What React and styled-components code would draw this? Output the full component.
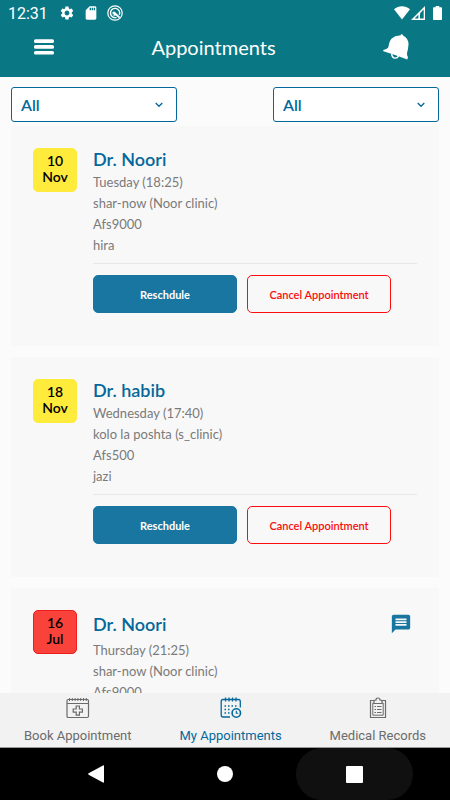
import React from "react";
import styled, { createGlobalStyle, ThemeProvider } from "styled-components";
import { MdSettings, MdSdCard, MdMessage } from "react-icons/md";

const theme = {
  colors: {
    header: "#0a7884",
    primary: "#1976a0",
    link: "#04689b",
    page: "#fbfbfb",
    card: "#f8f8f8",
    text: "#7a7a7a",
    danger: "#fb0d0d",
    yellow: "#ffeb3b",
    red: "#f9423a",
  },
};

const appointments = [
  {
    id: 1,
    day: "10",
    month: "Nov",
    doctor: "Dr. Noori",
    details: ["Tuesday (18:25)", "shar-now (Noor clinic)", "Afs9000", "hira"],
  },
  {
    id: 2,
    day: "18",
    month: "Nov",
    doctor: "Dr. habib",
    details: ["Wednesday (17:40)", "kolo la poshta (s_clinic)", "Afs500", "jazi"],
  },
  {
    id: 3,
    day: "16",
    month: "Jul",
    doctor: "Dr. Noori",
    details: ["Thursday (21:25)", "shar-now (Noor clinic)", "Afs9000"],
    past: true,
  },
];

const StatusIcons = () => (
  <StatusGroup $gap="1px">
    <svg width="16" height="14" viewBox="0 0 16 14" fill="#fff">
      <path d="M0 3.3C4.6-.7 11.4-.7 16 3.3L8 13.5z" />
    </svg>
    <svg width="15" height="14" viewBox="0 0 15 14">
      <path d="M14 0V14H0z" fill="#fff" />
      <path d="M7.4 8.8v3.8H3.6z" fill="#0a7884" />
      <path d="M9 7.2L12.700 3.5V12.600H9z" fill="#0a7884" />
    </svg>
    <svg width="15" height="14" viewBox="0 0 15 14" fill="#fff">
      <path d="M8.700 0h3.600v1.200h1.900q.8 0 .8.8v11.200q0 .8-.8.8H6.800q-.8 0-.8-.8V2q0-.8.8-.8h1.900z" />
    </svg>
  </StatusGroup>
);

const DebugIcon = () => (
  <svg width="16" height="16" viewBox="0 0 16 16" fill="none" stroke="#fff">
    <circle cx="8" cy="8" r="7.2" strokeWidth="1.2" />
    <path d="M12.300 9.800A4.600 4.600 0 1 0 9.600 12.300" strokeWidth="1.400" />
    <path d="M5 8.200Q6.200 5.600 8 6.900L13.200 11.900L11.900 13.200L9 10.500Q7 11.200 5.600 9.800L7.400 9.200z" fill="#fff" stroke="none" />
  </svg>
);

const MenuIcon = () => (
  <svg width="20" height="16" viewBox="0 0 20 16" fill="#fff">
    <rect y="0.300" width="20" height="3.700" rx="1.600" />
    <rect y="6.100" width="20" height="3.700" rx="1.600" />
    <rect y="11.900" width="20" height="3.700" rx="1.600" />
  </svg>
);

const BellIcon = () => (
  <svg width="26" height="26" viewBox="0 0 26 26" fill="#fff">
    <path d="M18.300.2Q20.300-.1 20.300 1.700Q25.600 4.500 25.500 10.500Q25.200 15 24.200 18.300Q23.600 21.300 25 23L24.300 25.500Q12 20.800.4 17.300Q-.2 16.200 1 15.800Q4.900 15 5.500 12.500Q6.300 6.900 8.700 4.400Q12.100 1.200 17.300 1.500z" />
    <path d="M8.700 19.900Q8.900 23.900 12.100 24.100Q14.600 24.200 15.500 22" fill="none" stroke="#fff" strokeWidth="1.400" />
  </svg>
);

const ChevronIcon = () => (
  <Chevron width="8" height="6" viewBox="0 0 8 6" fill="none" stroke="#04689b" strokeWidth="1.3">
    <path d="M.7 1L4 4.300L7.300 1" />
  </Chevron>
);

const BookIcon = () => (
  <svg width="24" height="22" viewBox="0 0 24 22" fill="none" stroke="currentColor">
    <rect x="1" y="2.500" width="21.500" height="18" rx="1.200" strokeWidth="1.200" />
    <path d="M1 6.500H22.500" />
    <path d="M3.500 1v3M6.300 1v3M9.100 1v3M11.900 1v3M14.700 1v3M17.500 1v3M20.300 1v3" />
    <path d="M10.200 9h3.200v3h3v3.200h-3v3h-3.200v-3h-3V12h3z" strokeWidth="1.200" />
  </svg>
);

const CalendarIcon = () => (
  <svg width="22" height="22" viewBox="0 0 22 22" fill="none" stroke="currentColor" strokeWidth="1.300">
    <path d="M10 20H3Q1.200 20 1.200 18V4.500Q1.200 2.500 3 2.500H18.500Q20.300 2.500 20.300 4.500V10.500" />
    <path d="M5.500 .5v4M9 .5v4M12.500 .5v4M16 .5v4" />
    <path d="M4.500 9h13M4.500 12.500h7M4.500 16h5.500" strokeDasharray="1.500 2" />
    <circle cx="16.300" cy="16" r="4.200" strokeWidth="1.600" />
    <path d="M16.300 13.700V16.300H18.200" strokeWidth="1.100" />
  </svg>
);

const RecordsIcon = () => (
  <svg width="18" height="22" viewBox="0 0 18 22" fill="none" stroke="currentColor">
    <path d="M5 3.500H1.500V20.500H16.500V3.500H13" strokeWidth="1.200" />
    <path d="M5 6H3.800V18.200H14.200V6H13" />
    <path d="M5 6.500V3.500L7 3Q7 1 9 1T11 3L13 3.500V6.500z" strokeWidth="1.200" />
    <path d="M5.500 9.500H7M8 9.500H12.500M5.500 12.500H7M8 12.500H12.500M5.500 15.500H7M8 15.500H12.500" />
  </svg>
);

const Filter = ({ label }) => (
  <SelectBox>
    <select aria-label={label} defaultValue="All">
      <option>All</option>
    </select>
    <ChevronIcon />
  </SelectBox>
);

const AppointmentCard = ({ item }) => (
  <Card>
    <DateBadge $past={item.past}>
      <span>{item.day}</span>
      <span>{item.month}</span>
    </DateBadge>
    <CardBody>
      <CardTitle>
        <h2>{item.doctor}</h2>
        {item.past && (
          <IconButton aria-label="Message">
            <MdMessage size={22} />
          </IconButton>
        )}
      </CardTitle>
      {item.details.map((line) => (
        <p key={line}>{line}</p>
      ))}
      <hr />
      {!item.past && (
        <Actions>
          <ActionButton>Reschdule</ActionButton>
          <ActionButton $outline>Cancel Appointment</ActionButton>
        </Actions>
      )}
    </CardBody>
  </Card>
);

const App = () => {
  return (
    <ThemeProvider theme={theme}>
      <GlobalStyle />
      <Screen>
        <Header>
          <StatusBar>
            <StatusGroup $gap="8px">
              <Clock>12:31</Clock>
              <MdSettings size={16} />
              <MdSdCard size={16} />
              <DebugIcon />
            </StatusGroup>
            <StatusIcons />
          </StatusBar>
          <Toolbar>
            <IconButton aria-label="Menu">
              <MenuIcon />
            </IconButton>
            <h1>Appointments</h1>
            <BellButton aria-label="Notifications">
              <BellIcon />
            </BellButton>
          </Toolbar>
        </Header>

        <Filters>
          <Filter label="Status" />
          <Filter label="Doctor" />
        </Filters>

        <List>
          {appointments.map((item) => (
            <AppointmentCard key={item.id} item={item} />
          ))}
        </List>

        {/* bottom tabs */}
        <Tabs>
          <Tab href="#book">
            <BookIcon />
            Book Appointment
          </Tab>
          <Tab href="#appointments" $active>
            <CalendarIcon />
            My Appointments
          </Tab>
          <Tab href="#records">
            <RecordsIcon />
            Medical Records
          </Tab>
        </Tabs>

        {/* system keys */}
        <SystemBar>
          <SystemKey aria-label="Back">
            <svg width="16" height="18" viewBox="0 0 16 18" fill="#fff">
              <path d="M15 .5Q16 0 16 1V17Q16 18 15 17.500L.6 9.700Q-.2 9 .6 8.300z" />
            </svg>
          </SystemKey>
          <SystemKey aria-label="Home">
            <svg width="16" height="16" viewBox="0 0 16 16" fill="#fff">
              <circle cx="8" cy="8" r="8" />
            </svg>
          </SystemKey>
          <SystemKey aria-label="Overview" $pressed>
            <svg width="17" height="17" viewBox="0 0 17 17" fill="#fff">
              <rect width="17" height="17" rx="1" />
            </svg>
          </SystemKey>
        </SystemBar>
      </Screen>
    </ThemeProvider>
  );
};

const GlobalStyle = createGlobalStyle`
  * {
    margin: 0;
    padding: 0;
    box-sizing: border-box;
  }
  body {
    font-family: Lato, sans-serif;
    background-color: ${theme.colors.page};
  }
  button {
    font-family: inherit;
    border: none;
    background: none;
    cursor: pointer;
  }
  svg {
    display: block;
    flex-shrink: 0;
  }
`;

const Screen = styled.div`
  display: flex;
  flex-direction: column;
  height: 100vh;
`;

const Header = styled.header`
  flex-shrink: 0;
  color: #fff;
  background-color: ${({ theme }) => theme.colors.header};
  padding-bottom: 9px;
`;

const StatusBar = styled.div`
  display: flex;
  justify-content: space-between;
  align-items: center;
  height: 26px;
  padding: 0 8px;
`;

const StatusGroup = styled.div`
  display: flex;
  align-items: center;
  gap: ${({ $gap }) => $gap};
`;

const Clock = styled.span`
  margin-right: 3px;
  font-family: Roboto, sans-serif;
  font-size: 16px;
`;

const Toolbar = styled.div`
  display: flex;
  justify-content: space-between;
  align-items: center;
  height: 42px;
  padding: 0 41px 0 34px;

  h1 {
    font-size: 20px;
    font-weight: 400;
  }
`;

const IconButton = styled.button`
  display: flex;
  align-items: center;
  justify-content: center;
  height: 28px;
  color: ${({ theme }) => theme.colors.primary};
`;

const BellButton = styled(IconButton)`
  width: 36px;
  justify-content: flex-end;
`;

const Filters = styled.div`
  display: flex;
  gap: 96px;
  flex-shrink: 0;
  padding: 10px 11px 4px;
`;

const SelectBox = styled.div`
  display: flex;
  align-items: center;
  flex: 1;
  height: 35px;
  background-color: #fff;
  border: 1px solid ${({ theme }) => theme.colors.link};
  border-radius: 3px;

  select {
    flex: 1;
    min-width: 0;
    height: 100%;
    margin-right: -22px;
    padding: 0 22px 0 9px;
    appearance: none;
    border: none;
    background: none;
    color: ${({ theme }) => theme.colors.link};
    font-family: inherit;
    font-size: 16px;
    font-weight: 600;
  }
`;

const Chevron = styled.svg`
  margin-right: 13px;
  pointer-events: none;
`;

const List = styled.main`
  flex: 1;
  min-height: 0;
  display: flex;
  flex-direction: column;
  gap: 11px;
  padding: 0 11px;
  overflow-y: auto;
  scrollbar-width: none;
`;

const Card = styled.article`
  display: flex;
  flex-shrink: 0;
  gap: 16px;
  padding: 22px 22px 33px;
  background-color: ${({ theme }) => theme.colors.card};
`;

const DateBadge = styled.div`
  display: flex;
  flex-direction: column;
  align-items: center;
  justify-content: center;
  flex-shrink: 0;
  width: 44px;
  height: 44px;
  padding-bottom: 2px;
  border: 1px solid ${({ $past, theme }) => ($past ? "#ee1c1c" : theme.colors.yellow)};
  border-radius: 5px;
  background-color: ${({ $past, theme }) => ($past ? theme.colors.red : theme.colors.yellow)};
  color: #000;
  font-size: 14px;
  font-weight: 600;
  line-height: 16px;
`;

const CardBody = styled.div`
  flex: 1;

  p {
    color: ${({ theme }) => theme.colors.text};
    font-size: 13px;
    line-height: 21px;
  }
  hr {
    margin: 7px 0 11px;
    border: none;
    border-top: 1px solid #e8e8e8;
  }
`;

const CardTitle = styled.div`
  display: flex;
  justify-content: space-between;
  align-items: center;
  margin-bottom: 2px;
  padding-right: 5px;

  h2 {
    color: ${({ theme }) => theme.colors.link};
    font-size: 18px;
    font-weight: 600;
    line-height: 22px;
  }
`;

const Actions = styled.div`
  display: flex;
  gap: 10px;
  padding-right: 26px;
`;

const ActionButton = styled.button`
  flex: 1;
  height: 38px;
  border: 1px solid ${({ $outline, theme }) => ($outline ? theme.colors.danger : theme.colors.primary)};
  border-radius: 5px;
  background-color: ${({ $outline, theme }) => ($outline ? "transparent" : theme.colors.primary)};
  color: ${({ $outline, theme }) => ($outline ? theme.colors.danger : "#fff")};
  font-size: 11px;
  font-weight: ${({ $outline }) => ($outline ? 600 : 700)};
`;

const Tabs = styled.nav`
  display: flex;
  flex-shrink: 0;
  height: 55px;
  background-color: #f2f2f2;
  border-bottom: 1px solid #999;
`;

const Tab = styled.a`
  flex: 1 1 auto;
  display: flex;
  flex-direction: column;
  align-items: center;
  gap: 9px;
  padding-top: 4px;
  color: ${({ $active, theme }) => ($active ? theme.colors.link : "#6b6b6b")};
  font-family: Roboto, sans-serif;
  font-size: 13px;
  line-height: 16px;
  text-decoration: none;
`;

const SystemBar = styled.div`
  display: flex;
  justify-content: center;
  align-items: center;
  flex-shrink: 0;
  gap: 12px;
  height: 52px;
  background-color: #000;
`;

const SystemKey = styled.button`
  display: flex;
  align-items: center;
  justify-content: center;
  width: 117px;
  height: 52px;
  border-radius: 26px;
  background-color: ${({ $pressed }) => ($pressed ? "#101010" : "transparent")};
`;

export default App;
